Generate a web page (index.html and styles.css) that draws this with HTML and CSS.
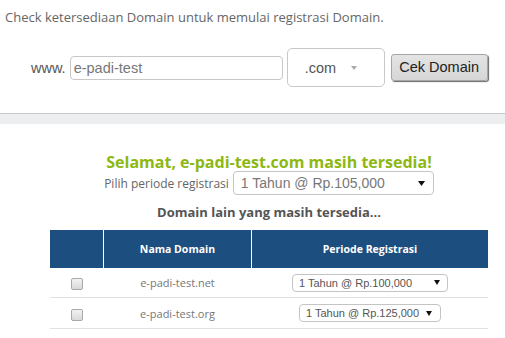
FILE: index.html
```html
<!DOCTYPE html>
<html>
<head>
<meta charset="utf-8">
<link rel="stylesheet" href="styles.css">
</head>
<body>
<div class="top">
  <p class="intro">Check ketersediaan Domain untuk memulai registrasi Domain.</p>
  <div class="search">
    <span class="www">www.</span>
    <div class="input">e-padi-test</div>
    <div class="tld"><span>.com</span><span class="caret"></span></div>
    <button class="btn">Cek Domain</button>
  </div>
</div>
<div class="band"></div>
<div class="result">
  <h2 class="title">Selamat, e-padi-test.com masih tersedia!</h2>
  <div class="period">
    <span class="period-label">Pilih periode registrasi</span>
    <div class="sel sel-lg"><span>1 Tahun @ Rp.105,000</span><svg class="arrow" width="7" height="5" viewBox="0 0 7 5"><polygon points="0,0 7,0 3.5,5" fill="#111"/></svg></div>
  </div>
  <h3 class="other">Domain lain yang masih tersedia...</h3>
  <table class="domains">
    <thead>
      <tr><th class="c1"></th><th class="c2">Nama Domain</th><th class="c3">Periode Registrasi</th></tr>
    </thead>
    <tbody>
      <tr class="r1">
        <td><span class="cb"></span></td>
        <td>e-padi-test.net</td>
        <td><div class="sel sel-a"><span>1 Tahun @ Rp.100,000</span><svg class="arrow" width="6" height="5" viewBox="0 0 6 5"><polygon points="0,0 6,0 3,5" fill="#111"/></svg></div></td>
      </tr>
      <tr class="r2">
        <td><span class="cb"></span></td>
        <td>e-padi-test.org</td>
        <td><div class="sel sel-b"><span>1 Tahun @ Rp.125,000</span><svg class="arrow" width="6" height="5" viewBox="0 0 6 5"><polygon points="0,0 6,0 3,5" fill="#111"/></svg></div></td>
      </tr>
    </tbody>
  </table>
</div>
</body>
</html>
```
FILE: styles.css
```css
body {
  margin: 0;
  background: #fff;
  font-family: "Open Sans", sans-serif;
}
.top {
  padding: 8px 0 26px 0;
  border-bottom: 1px solid #c9c9c9;
}
.intro {
  margin: 0 0 0 5px;
  font-size: 13px;
  line-height: 18px;
  color: #666;
}
.search {
  display: flex;
  align-items: center;
  height: 39px;
  margin-top: 22px;
  padding-left: 31px;
  font-family: "Liberation Sans", Arial, sans-serif;
  font-size: 14.5px;
}
.www {
  color: #555;
  margin-right: 4px;
}
.input {
  box-sizing: border-box;
  width: 213px;
  height: 24px;
  border: 1px solid #c8c8c8;
  border-radius: 4px;
  padding-left: 3px;
  line-height: 22px;
  color: #777;
}
.tld {
  box-sizing: border-box;
  margin-left: 4px;
  width: 98px;
  height: 39px;
  border: 1px solid #c8c8c8;
  border-radius: 5px;
  display: flex;
  align-items: center;
  padding-left: 17px;
  color: #555;
}
.caret {
  margin-left: 15px;
  width: 0;
  height: 0;
  border-left: 3.5px solid transparent;
  border-right: 3.5px solid transparent;
  border-top: 4px solid #aaa;
}
.btn {
  box-sizing: border-box;
  margin-left: 6px;
  width: 97px;
  height: 27px;
  padding: 0 0 1px 0;
  font: inherit;
  color: #222;
  background: linear-gradient(#e4e4e4, #d6d6d6);
  border: 1px solid #a5a5a5;
  border-radius: 3px;
  box-shadow: 1px 1px 1px #6a6a6a;
}
.band {
  height: 10px;
  background: #eceeef;
}
.result {
  width: 438px;
  margin-left: 50px;
  text-align: center;
}
.title {
  margin: 29px 0 0 0;
  font-size: 16px;
  line-height: 18px;
  font-weight: 700;
  color: #8db814;
}
.period {
  display: flex;
  justify-content: center;
  align-items: center;
  height: 24px;
}
.period-label {
  font-size: 12px;
  color: #666;
  margin-right: 4px;
}
.sel {
  box-sizing: border-box;
  display: flex;
  justify-content: space-between;
  align-items: center;
  border: 1px solid #c4c4c4;
  border-radius: 4px;
  font-family: "Liberation Sans", Arial, sans-serif;
  color: #666;
  background: #fff;
}
.sel-lg {
  width: 201px;
  height: 24px;
  padding: 0 8px 0 7px;
  font-size: 14px;
  color: #777;
}
.other {
  margin: 9px 0 10px 0;
  font-size: 13px;
  line-height: 16px;
  font-weight: 700;
  color: #555;
}
.domains {
  width: 438px;
  border-collapse: collapse;
}
.domains th {
  height: 38px;
  padding: 0;
  background: #1d4e80;
  color: #fff;
  font-size: 10.5px;
  font-weight: 700;
  border-left: 1px solid #fff;
  border-right: 1px solid #fff;
}
.domains th.c1 { width: 53px; border-left: none; }
.domains th.c2 { width: 147px; }
.domains th.c3 { border-right: none; }
.domains td {
  padding: 0;
  font-size: 11px;
  color: #777;
  border-bottom: 1px solid #e2e2e2;
  border-left: 1px solid #fff;
  border-right: 1px solid #fff;
}
.domains td:first-child { border-left: none; }
.domains td:last-child { border-right: none; }
.r1 td { height: 29px; }
.r2 td { height: 30px; }
.cb {
  display: inline-block;
  box-sizing: border-box;
  width: 12px;
  height: 12px;
  vertical-align: middle;
  border: 1px solid #a9a9a9;
  border-radius: 2px;
  background: linear-gradient(#f2f2f2, #d9d9d9);
}
.sel-a, .sel-b {
  height: 18px;
  margin: 0 auto;
  font-size: 11px;
  color: #555;
}
.sel-a {
  width: 156px;
  padding: 0 7px 0 6px;
}
.sel-b {
  width: 142px;
  padding: 0 8px 0 6px;
}
```
